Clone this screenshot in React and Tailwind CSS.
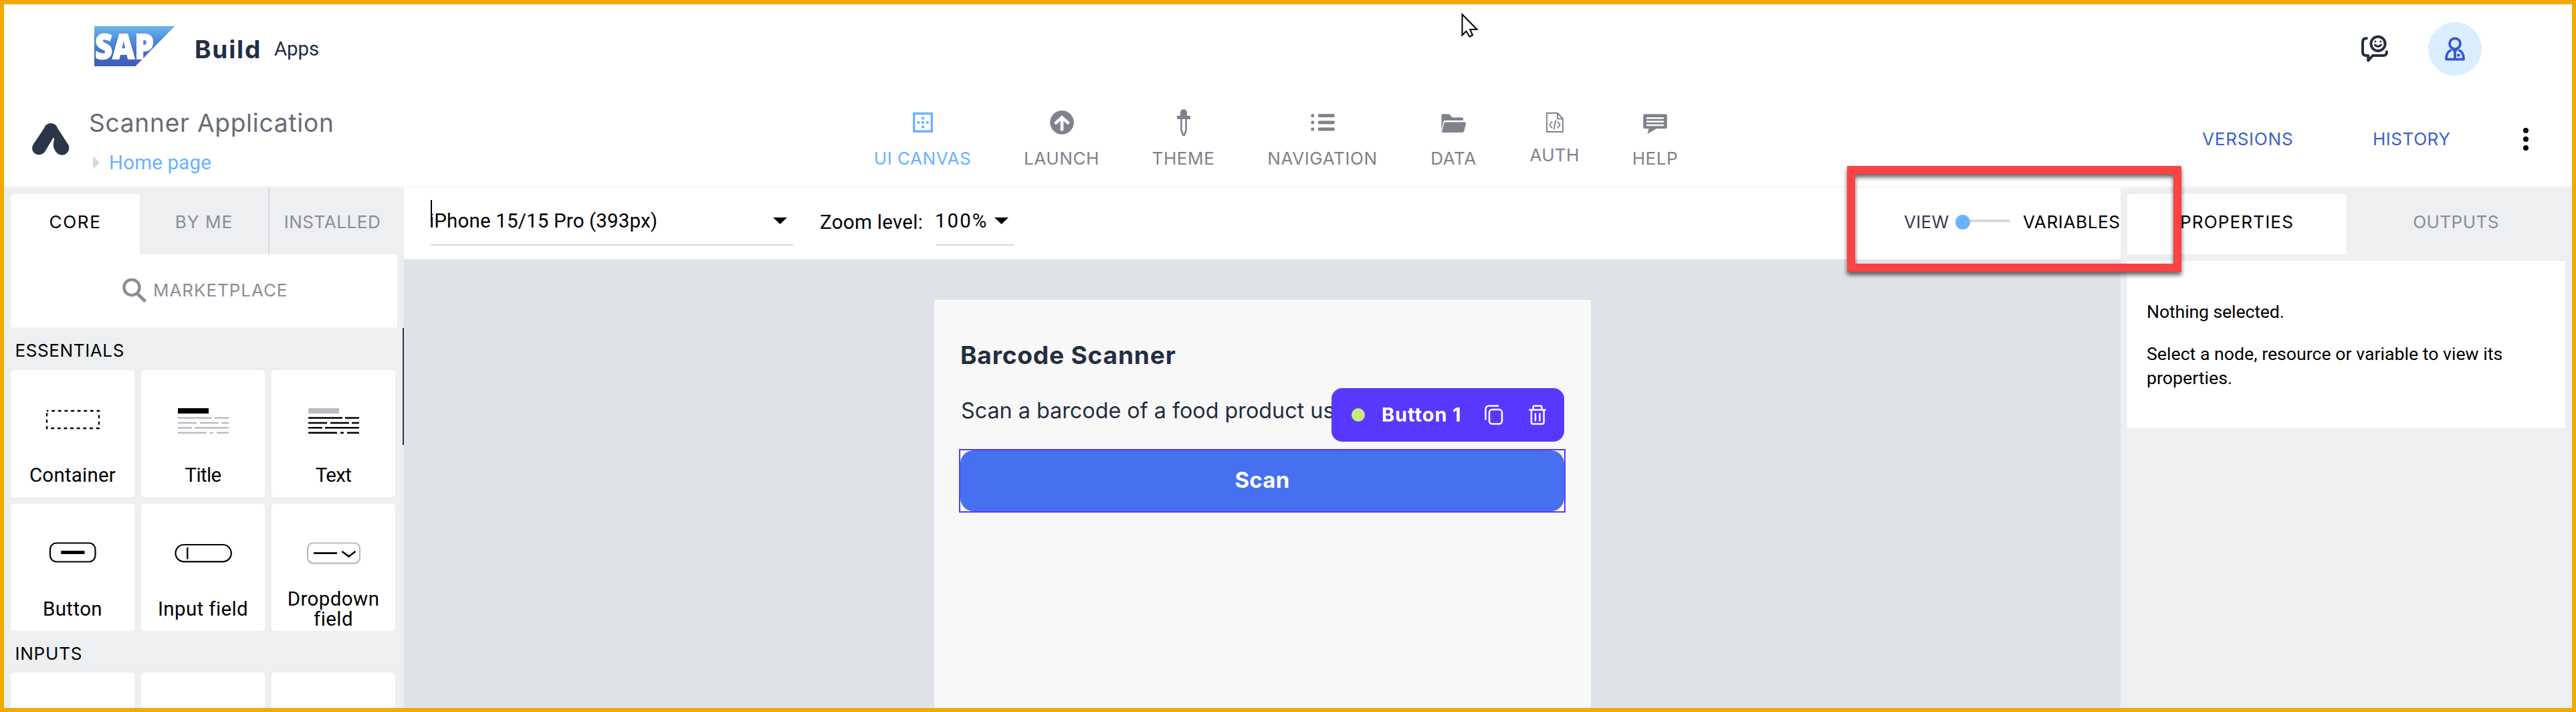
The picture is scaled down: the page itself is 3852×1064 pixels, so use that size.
import React from 'react';

const SapLogo = () => (
  <svg width="121" height="60" viewBox="0 0 121 60" className="mb-2 shrink-0 overflow-visible">
    <defs>
      <linearGradient id="sap" x1="0" y1="0" x2="0" y2="1">
        <stop offset="0" stopColor="#6cb8f0" />
        <stop offset="0.3" stopColor="#5590da" />
        <stop offset="0.75" stopColor="#4166c4" />
        <stop offset="1" stopColor="#3f5cba" />
      </linearGradient>
    </defs>
    <path d="M0 0H120.5L61.5 60H0Z" fill="url(#sap)" />
    <text
      x="1"
      y="48.5"
      textLength="88"
      lengthAdjust="spacingAndGlyphs"
      fill="#fff"
      stroke="#fff"
      strokeWidth="1.6"
      className="font-['Open_Sans',sans-serif] text-[52px] font-extrabold"
    >
      SAP
    </text>
  </svg>
);

const FeedbackIcon = () => (
  <svg width="40" height="42" viewBox="0 0 40 42" fill="none" stroke="#232f42" strokeWidth="4" strokeLinecap="round" strokeLinejoin="round">
    <path d="M8 5.3C4 5.3 2 7 2 10.5V25.5C2 29.5 4 31 7 31H10.2V38.6L17 31H32.5C36.5 31 38 29.5 38 25.3" />
    <circle cx="25" cy="13.3" r="10.6" />
    <circle cx="21" cy="10" r="1.5" fill="#232f42" stroke="none" />
    <circle cx="28.8" cy="10" r="1.5" fill="#232f42" stroke="none" />
    <path d="M20.6 15.2C22.6 18 27.4 18 29.4 15.2" strokeWidth="3.2" />
  </svg>
);

const UserIcon = () => (
  <svg width="30" height="36" viewBox="0 0 30 36" fill="none" stroke="#3757d6" strokeWidth="3.8" strokeLinejoin="round">
    <circle cx="15" cy="10.3" r="8" />
    <path d="M9.5 19.8C4.5 21.5 2 26 2 33.6H28C28 26 25.5 21.5 20.5 19.8" />
    <path d="M15 22V33" />
    <path d="M9.5 18.5H20.5L15 24.5Z" fill="#3757d6" stroke="none" />
    <rect x="18" y="25.5" width="4.6" height="4" rx="1" fill="#3757d6" stroke="none" />
  </svg>
);

const AppMark = () => (
  <svg width="56" height="48" viewBox="0 0 56 48" className="shrink-0">
    <path
      d="M18 7.5C21-2.2 35-2.2 38 7.5L54.3 32.5C59 42 47 53 37.500 45C33.5 41 31.5 36.5 31.8 31L33 24C33 21.5 32 21.5 30.6 23.5L19 43C10 53-4 44 1.3 32.5Z"
      fill="#2b3648"
    />
  </svg>
);

const CanvasIcon = () => (
  <svg width="30" height="30" viewBox="0 0 30 30" fill="#6bb3ff">
    <rect x="1.7" y="1.7" width="26.6" height="26.6" fill="none" stroke="#6bb3ff" strokeWidth="3.4" />
    <rect x="13" y="7" width="4" height="3.5" />
    <rect x="13" y="13.3" width="4" height="3.5" />
    <rect x="13" y="20" width="4" height="3.5" />
    <rect x="6.3" y="13.3" width="4" height="3.5" />
    <rect x="19.7" y="13.3" width="4" height="3.5" />
  </svg>
);
const LaunchIcon = () => (
  <svg width="36" height="36" viewBox="0 0 36 36">
    <circle cx="18" cy="18" r="17.8" fill="#7f828a" />
    <path d="M18 28.5V11.5M9 18.5L18 10.5L27 18.5" fill="none" stroke="#fff" strokeWidth="4.6" strokeLinecap="round" />
  </svg>
);
const ThemeIcon = () => (
  <svg width="20" height="40" viewBox="0 0 20 40">
    <path d="M5 10V5C5-1.5 15-1.5 15 5V10H20V15H0V10Z" fill="#7f828a" />
    <path d="M6.4 15V31.5L9 38.6H11L13.6 31.5V15" fill="none" stroke="#7f828a" strokeWidth="2.6" />
  </svg>
);
const ListIcon = () => (
  <svg width="36" height="26" viewBox="0 0 36 26" fill="#7f828a">
    {[0.3, 10.4, 20.5].map((y) => (
      <React.Fragment key={y}>
        <rect x="0.3" y={y} width="5" height="5" rx="2.5" />
        <rect x="10.8" y={y} width="25" height="5" rx="2.2" />
      </React.Fragment>
    ))}
  </svg>
);
const FolderIcon = () => (
  <svg width="38" height="28" viewBox="0 0 38 28" fill="#7f828a">
    <path d="M0.5 25V2.5Q0.5 0.5 2.5 0.5H11Q12.5 0.5 13.3 1.5L16.5 5.5H31Q33 5.5 33 7.5V10H5.5Q3.8 10 3.4 11.6Z" />
    <path d="M6 12.5H35Q37.4 12.5 37 15L34.4 25.6Q33.9 28 32 28H0.8L4.3 14Q4.7 12.5 6 12.5Z" />
  </svg>
);
const CodeFileIcon = () => (
  <svg width="26" height="30" viewBox="0 0 26 30" fill="none" stroke="#7f828a" strokeWidth="1.9" strokeLinejoin="round">
    <path d="M1 1H17L25 9.5V29H1Z" />
    <path d="M17 1V9.5H25" />
    <path d="M9 13.5L5.3 18.5L9 23.5M17 13.5L20.7 18.5L17 23.5M14.4 11.5L11.6 25.5" />
  </svg>
);
const CommentIcon = () => (
  <svg width="36" height="30" viewBox="0 0 36 30">
    <path
      d="M2.5 0.5H33.5Q35.8 0.5 35.8 2.8V20Q35.8 22.3 33.5 22.3H20L6.5 30L8.5 22.3H2.5Q0.2 22.3 0.2 20V2.8Q0.2 0.5 2.5 0.5Z"
      fill="#7f828a"
    />
    <path d="M6 6.5H30M6 11.8H30M6 17H30" stroke="#fff" strokeWidth="2.6" strokeLinecap="round" />
  </svg>
);

const NavItem = ({ icon, label, className, iconClass = '', labelClass = 'mt-4 tracking-[0.53px]' }) => (
  <div className={`flex flex-col items-center ${className}`}>
    <div className={`flex h-10 items-center ${iconClass}`}>{icon}</div>
    <div className={`font-['Inter',sans-serif] text-[26.1px] leading-9 ${labelClass}`}>{label}</div>
  </div>
);

const Header = () => (
  <header className="h-[274px] shrink-0 border-t-2 border-b-2 border-t-[#e5e5e6] border-b-[#f6f7f9] bg-white">
    <div className="flex h-[130px] items-center pl-[135px] pr-[135px]">
      <SapLogo />
      <div className="ml-[29px] w-[119px] pt-[2px] font-['Inter',sans-serif] text-[37.1px] leading-[50px] font-bold tracking-[1.8px] text-[#232e42]">Build</div>
      <div className="text-[29.5px] leading-9 tracking-[-0.13px] text-[#232e42]">Apps</div>
      <div className="ml-auto flex items-center gap-[60px]">
        <FeedbackIcon />
        <div className="flex size-20 items-center justify-center rounded-full bg-[#dbeeff]">
          <UserIcon />
        </div>
      </div>
    </div>
    <div className="grid h-[140px] grid-cols-[1261px_1282px_1fr]">
      <div className="flex pl-[42px]">
        <div className="flex items-center">
          <AppMark />
        </div>
        <div className="pt-[21px] pl-[29px]">
          <div className="font-['Inter',sans-serif] text-[37.1px] leading-[50px] tracking-[0.74px] text-[#676b77]">Scanner Application</div>
          <div className="mt-4 flex items-center pl-[6px]">
            <svg width="10" height="20" viewBox="0 0 10 20">
              <path d="M0 0L10 10L0 20Z" fill="#d7d9dd" />
            </svg>
            <div className="ml-[14px] text-[29.5px] leading-9 tracking-[0.16px] text-[#6bb1ff]">Home page</div>
          </div>
        </div>
      </div>
      <nav className="flex pt-[25px] text-[#7f828a]">
        <NavItem icon={<CanvasIcon />} label="UI CANVAS" className="w-[225px]" labelClass="mt-4 tracking-[0.51px] text-[#6bb1ff]" />
        <NavItem icon={<LaunchIcon />} label="LAUNCH" className="w-[191px]" />
        <NavItem icon={<ThemeIcon />} label="THEME" className="w-[173px]" />
        <NavItem icon={<ListIcon />} label="NAVIGATION" className="w-[243px]" />
        <NavItem icon={<FolderIcon />} label="DATA" className="w-[149px]" iconClass="pt-px" />
        <NavItem icon={<CodeFileIcon />} label="AUTH" className="w-[153px]" labelClass="mt-[11px] tracking-[0.26px]" />
        <NavItem icon={<CommentIcon />} label="HELP" className="w-[148px]" iconClass="pt-1" />
      </nav>
      <div className="flex items-center pl-[744px] font-['Inter',sans-serif] text-[26.1px] leading-9 text-[#3f5fce]">
        <div className="w-[255px] tracking-[0.72px]">VERSIONS</div>
        <div className="w-[225px] tracking-[0.48px]">HISTORY</div>
        <div className="flex flex-col gap-[5px]">
          <span className="size-2 rounded-full bg-black" />
          <span className="size-2 rounded-full bg-black" />
          <span className="size-2 rounded-full bg-black" />
        </div>
      </div>
    </div>
  </header>
);

const ParagraphArt = ({ head, lines }) => (
  <>
    <rect x="55" y="13" width="46" height="8" fill={head} />
    <path
      d="M55 27.5H106M110 27.5H131M55 35H83M88 35H116M120 35H131M55 42.3H76M80 42.3H131M55 49.8H98M103 49.8H108M113 49.8H131"
      stroke={lines}
      strokeWidth="2.6"
    />
  </>
);

const art = {
  Container: <rect x="54" y="17" width="78" height="26" fill="none" stroke="#000" strokeWidth="2.4" strokeDasharray="4.8 4.83" strokeDashoffset="2.4" />,
  Title: <ParagraphArt head="#000" lines="#bbbcc3" />,
  Text: <ParagraphArt head="#bbbcc3" lines="#000" />,
  Button: (
    <>
      <rect x="59" y="14.5" width="67.5" height="28" rx="9.5" fill="none" stroke="#000" strokeWidth="2.2" />
      <rect x="75.3" y="26" width="35.2" height="5" />
    </>
  ),
  'Input field': (
    <>
      <rect x="51.5" y="17" width="83.3" height="25.3" rx="12.6" fill="none" stroke="#000" strokeWidth="2.2" />
      <path d="M69.3 21V38.7" stroke="#000" strokeWidth="2.3" />
    </>
  ),
  'Dropdown field': (
    <>
      <rect x="54" y="14.5" width="78" height="30.2" rx="8" fill="none" stroke="#b9bac1" strokeWidth="2.2" />
      <path d="M63 29.6H98" stroke="#000" strokeWidth="2.8" />
      <path d="M105.5 27L115.5 34.5L125.5 27" fill="none" stroke="#000" strokeWidth="2.6" />
    </>
  ),
};

const Card = ({ label, tracking = '' }) => (
  <div className="h-[190px] rounded-[5px] bg-white pt-11">
    {label && (
      <>
        <svg width="185" height="60" viewBox="0 0 185 60">
          {art[label]}
        </svg>
        <div className={`mx-auto mt-[19px] flex h-[68px] w-[160px] items-center justify-center text-center text-[29.5px] leading-[30px] ${tracking}`}>
          {label}
        </div>
      </>
    )}
  </div>
);

const LeftPanel = () => (
  <aside className="flex w-[598px] shrink-0 flex-col bg-[#edeff1] pl-[10px]">
    <div className="flex h-[100px] shrink-0 font-['Inter',sans-serif] text-[26.1px] leading-9">
      <div className="mt-[10px] flex w-[193px] items-center justify-center rounded-t-[5px] bg-white pb-[6px] tracking-[1.6px]">CORE</div>
      <div className="flex w-[194px] items-center justify-center border-r-2 border-[#d7d9dc] pt-1 tracking-[1.06px] text-[#8b8e96]">BY ME</div>
      <div className="flex w-[188px] items-center justify-center pt-1 tracking-[0.52px] text-[#8b8e96]">INSTALLED</div>
    </div>
    <div className="flex h-[110px] w-[578px] shrink-0 items-center border-b-2 border-[#f8f9fb] bg-white pl-[167px] text-[#8b8e96]">
      <svg width="37" height="36" viewBox="0 0 37 36" fill="none" stroke="#8b8e96" strokeWidth="4.4">
        <circle cx="14" cy="13.5" r="11.6" />
        <path d="M22.5 23L34.5 34.5" strokeWidth="5" />
      </svg>
      <div className="ml-[9px] font-['Inter',sans-serif] text-[26.1px] leading-9 tracking-[0.88px]">MARKETPLACE</div>
    </div>
    <div className="relative min-h-0 flex-1 overflow-hidden">
      <div className="flex h-[63px] items-center pt-[5px] pl-[6.5px] font-['Inter',sans-serif] text-[26.1px] leading-9 tracking-[0.56px]">ESSENTIALS</div>
      <div className="grid grid-cols-[185px_185px_185px] gap-[10px]">
        <Card label="Container" tracking="tracking-[0.23px]" />
        <Card label="Title" tracking="tracking-[-0.66px]" />
        <Card label="Text" tracking="tracking-[-0.66px]" />
        <Card label="Button" tracking="tracking-[0.38px]" />
        <Card label="Input field" tracking="tracking-[0.37px]" />
        <Card label="Dropdown field" tracking="tracking-[0.42px]" />
      </div>
      <div className="flex h-[62px] items-center pt-[6px] pl-[6.5px] font-['Inter',sans-serif] text-[26.1px] leading-9 tracking-[0.72px]">INPUTS</div>
      <div className="grid grid-cols-[185px_185px_185px] gap-[10px]">
        <Card />
        <Card />
        <Card />
      </div>
      <div className="absolute top-0 right-0 h-[175px] w-[2px] bg-[#2e3448]" />
    </div>
  </aside>
);

const Caret = () => (
  <svg width="21" height="10" viewBox="0 0 21 10">
    <path d="M0 0H21L10.5 10Z" />
  </svg>
);

const Toolbar = () => (
  <div className="flex h-[108px] shrink-0 border-b-2 border-[#f5f6f8] bg-white pl-10">
    <div className="relative flex h-[87px] w-[543px] items-center justify-between border-b-2 border-[#d7d9dd] pt-[15px] pr-[10px]">
      <span className="-ml-[2px] text-[29.5px] leading-9 tracking-[0.16px]">iPhone 15/15 Pro (393px)</span>
      <Caret />
      <div className="absolute top-[19px] left-0 h-[33px] w-[2px] bg-black" />
    </div>
    <div className="ml-[39px] flex h-[87px] w-[174px] items-center pt-[17px] text-[29.5px] leading-9 tracking-[0.3px]">Zoom level:</div>
    <div className="flex h-[87px] w-[117px] items-center justify-between border-b-2 border-[#d7d9dd] pt-[15px] pr-[9px]">
      <span className="-ml-[2px] text-[29.5px] leading-9 tracking-[2px]">100%</span>
      <Caret />
    </div>
    <div className="ml-auto flex h-[104px] items-center font-['Inter',sans-serif] text-[26.1px] leading-9">
      <div className="w-[77px] tracking-[0.26px] text-[#373b50]">VIEW</div>
      <div className="size-[22px] rounded-full bg-[#6bb3ff]" />
      <div className="mb-1 h-1 w-[59px] bg-[#d8d9dd]" />
      <div className="ml-5 w-[146px] tracking-[0.6px]">VARIABLES</div>
    </div>
  </div>
);

const CopyIcon = () => (
  <svg width="28" height="30" viewBox="0 0 28 30" fill="none" stroke="#fff" strokeWidth="2.5" strokeLinecap="round">
    <path d="M20 1.5H7Q1.5 1.5 1.5 7V21.5" />
    <rect x="7" y="7" width="19" height="21.6" rx="4.5" />
  </svg>
);
const TrashIcon = () => (
  <svg width="26" height="30" viewBox="0 0 26 30" fill="none" stroke="#fff" strokeWidth="2.5" strokeLinecap="round" strokeLinejoin="round">
    <path d="M1.3 7.6H24.7M6.7 7.6V3.5Q6.7 1.5 8.7 1.5H17.3Q19.3 1.5 19.3 3.5V7.6" />
    <path d="M3.9 7.6V26Q3.9 28.6 6.5 28.6H20Q22.6 28.6 22.6 26V7.6M10 13.5V23.5M16.5 13.5V23.5" />
  </svg>
);

const Canvas = () => (
  <div className="flex min-h-0 flex-1 bg-[#dfe2e7] pt-[60px] pl-[792.5px]">
    <div className="relative w-[982px] bg-[#f8f8f8] pt-[58px] pl-[37.5px] text-[#232e42]">
      <div className="pl-[2px] font-['Inter',sans-serif] text-[37.1px] leading-[50px] font-bold tracking-[0.81px]">Barcode Scanner</div>
      <div className="mt-[36px] pl-[3px] font-['Inter',sans-serif] text-[32.3px] leading-[44px] whitespace-nowrap">Scan a barcode of a food product us</div>
      <div className="mt-[35px] h-[95px] w-[907px] border-2 border-[#5838ff]">
        <div className="flex h-full items-center justify-center rounded-[20px] bg-[#4670f0] pb-[3px] font-['Inter',sans-serif] text-[33px] leading-[44px] font-bold tracking-[0.26px] text-white">
          Scan
        </div>
      </div>
      <div className="absolute top-[132px] left-[594.5px] flex h-20 w-[348px] items-center rounded-[16px] bg-[#5838ff] pl-[30px]">
        <div className="size-5 rounded-full bg-[#c8e882]" />
        <div className="ml-[25px] w-[154px] font-['Inter',sans-serif] text-[28.9px] leading-9 font-bold tracking-[0.94px] text-white">Button 1</div>
        <CopyIcon />
        <div className="ml-[38px] flex">
          <TrashIcon />
        </div>
      </div>
    </div>
  </div>
);

const RightPanel = () => (
  <aside className="w-[675px] shrink-0 bg-[#edeff1] px-[10px]">
    <div className="flex h-[100px] font-['Inter',sans-serif] text-[26.1px] leading-9">
      <div className="mt-[10px] flex w-[328px] items-center justify-center rounded-t-[5px] bg-white pb-[6px] tracking-[1.12px]">PROPERTIES</div>
      <div className="flex w-[327px] items-center justify-center pt-1 tracking-[0.4px] text-[#8b8e96]">OUTPUTS</div>
    </div>
    <div className="mt-[10px] h-[250px] bg-white pt-[58px] pl-[29px] text-[26.7px] leading-9">
      <p className="tracking-[-0.14px]">Nothing selected.</p>
      <p className="mt-[27px] w-[560px]">Select a node, resource or variable to view its properties.</p>
    </div>
  </aside>
);

export default function App() {
  return (
    <div className="relative flex h-[1064px] w-[3852px] flex-col overflow-hidden border-[6px] border-[#f0ab00] bg-white font-['Roboto',sans-serif] text-black">
      <Header />
      <div className="flex min-h-0 flex-1">
        <LeftPanel />
        <main className="flex w-[2567px] shrink-0 flex-col">
          <Toolbar />
          <Canvas />
        </main>
        <RightPanel />
      </div>
      <div className="absolute top-[242px] left-[2756px] h-[158px] w-[500px] border-12 border-[#fc4242] drop-shadow-[0_5px_3px_rgba(0,0,0,0.6)]" />
      <svg width="28" height="40" viewBox="0 0 28 40" className="absolute top-[13px] left-[2178px]">
        <path d="M2.5 2.5V33.5L8.5 27.5L13.4 35.8L18 33.5L14.2 25H24.5Z" fill="#fff" stroke="#000" strokeWidth="2" />
      </svg>
    </div>
  );
}
